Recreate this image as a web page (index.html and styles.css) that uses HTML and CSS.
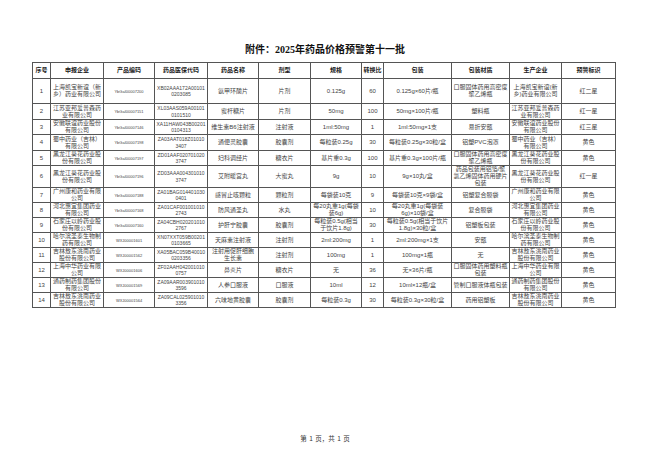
FILE: index.html
```html
<!DOCTYPE html>
<html lang="zh-CN">
<head>
<meta charset="utf-8">
<title>附件：2025年药品价格预警第十一批</title>
<link rel="stylesheet" href="styles.css">
</head>
<body>
<div class="page">
  <h1 class="title">附件：2025年药品价格预警第十一批</h1>
  <table class="grid">
    <colgroup>
      <col class="c-no"><col class="c-corp"><col class="c-code"><col class="c-yb"><col class="c-name"><col class="c-form"><col class="c-spec"><col class="c-ratio"><col class="c-pack"><col class="c-mat"><col class="c-maker"><col class="c-flag">
    </colgroup>
    <thead>
      <tr class="h16">
        <th>序号</th><th>申报企业</th><th>产品编码</th><th>药品医保代码</th><th>药品名称</th><th>剂型</th><th>规格</th><th>转换比</th><th>包装</th><th>包装材质</th><th>生产企业</th><th>预警标识</th>
      </tr>
    </thead>
    <tbody>
      <tr class="h25">
        <td>1</td><td>上海凯宝新谊（新乡）药业有限公司</td><td class="code">YbGaI00007200</td><td class="yb">XB02AAA172A001010203085</td><td>氨甲环酸片</td><td>片剂</td><td>0.125g</td><td>60</td><td>0.125g×60片/瓶</td><td>口服固体药用高密度聚乙烯瓶</td><td>上海凯宝新谊(新乡)药业有限公司</td><td>红二星</td>
      </tr>
      <tr class="h16">
        <td>2</td><td>江苏亚邦爱普森药业有限公司</td><td class="code">YbGaI00007151</td><td class="yb">XL03AAS059A001010101510</td><td>蜜杆糖片</td><td>片剂</td><td>50mg</td><td>100</td><td>50mg×100片/瓶</td><td>塑料瓶</td><td>江苏亚邦爱普森药业有限公司</td><td>红一星</td>
      </tr>
      <tr>
        <td>3</td><td>安徽联谊药业股份有限公司</td><td class="code">YbGaI00007146</td><td class="yb">XA11HAW043B002010104313</td><td>维生素B6注射液</td><td>注射液</td><td>1ml:50mg</td><td>1</td><td>1ml:50mg×1支</td><td>易折安瓿</td><td>安徽联谊药业股份有限公司</td><td>红三星</td>
      </tr>
      <tr class="h16">
        <td>4</td><td>蜀中药业（吉林）有限公司</td><td class="code">YbGaI00007198</td><td class="yb">ZA03AAT018Z010103407</td><td>通便灵胶囊</td><td>胶囊剂</td><td>每粒装0.25g</td><td>30</td><td>每粒装0.25g×30粒/盒</td><td>铝塑PVC泡罩</td><td>蜀中药业（吉林）有限公司</td><td>黄色</td>
      </tr>
      <tr>
        <td>5</td><td>黑龙江葵花药业股份有限公司</td><td class="code">YbGaI00007197</td><td class="yb">ZD01AAF0207010203747</td><td>妇科调经片</td><td>糖衣片</td><td>基片重0.3g</td><td>100</td><td>基片重0.3g×100片/瓶</td><td>口服固体药用高密度聚乙烯瓶</td><td>黑龙江葵花药业股份有限公司</td><td>黄色</td>
      </tr>
      <tr class="h22">
        <td>6</td><td>黑龙江葵花药业股份有限公司</td><td class="code">YbGaI00007196</td><td class="yb">ZD03AAA0043010103747</td><td>艾附暖宫丸</td><td>大蜜丸</td><td>9g</td><td>10</td><td>9g×10丸/盒</td><td>药品包装用铝箔/聚氯乙烯固体药用硬片包装</td><td>黑龙江葵花药业股份有限公司</td><td>红一星</td>
      </tr>
      <tr>
        <td>7</td><td>广州康和药业有限公司</td><td class="code">YbGaI00007188</td><td class="yb">ZA01BAG0144010300401</td><td>感冒止咳颗粒</td><td>颗粒剂</td><td>每袋装10克</td><td>9</td><td>每袋装10克×9袋/盒</td><td>铝塑复合膜袋</td><td>广州康和药业有限公司</td><td>黄色</td>
      </tr>
      <tr>
        <td>8</td><td>河北惠宜集团药业有限公司</td><td class="code">YbGaI00007168</td><td class="yb">ZA01CAF0010010102743</td><td>防风通圣丸</td><td>水丸</td><td>每20丸重1g(每袋装6g)</td><td>10</td><td>每20丸重1g(每袋装6g)×10袋/盒</td><td>复合膜袋</td><td>河北惠宜集团药业有限公司</td><td>黄色</td>
      </tr>
      <tr>
        <td>9</td><td>石家庄以岭药业股份有限公司</td><td class="code">YbGaI00007160</td><td class="yb">ZA04CBH0202010102767</td><td>护肝宁胶囊</td><td>胶囊剂</td><td>每粒装0.5g(相当于饮片1.8g)</td><td>30</td><td>每粒装0.5g(相当于饮片1.8g)×30粒/盒</td><td>铝塑板包装</td><td>石家庄以岭药业股份有限公司</td><td>黄色</td>
      </tr>
      <tr>
        <td>10</td><td>哈尔滨圣泰生物制药有限公司</td><td class="code">WXJ00001601</td><td class="yb">XN07XXT059B002010103665</td><td>天麻素注射液</td><td>注射剂</td><td>2ml:200mg</td><td>1</td><td>2ml:200mg×1支</td><td>安瓿</td><td>哈尔滨圣泰生物制药有限公司</td><td>黄色</td>
      </tr>
      <tr>
        <td>11</td><td>吉林敖东洮南药业股份有限公司</td><td class="code">WXJ00001562</td><td class="yb">XA05BAC059B400100203356</td><td>注射用促肝细胞生长素</td><td>注射剂</td><td>100mg</td><td>1</td><td>100mg×1瓶</td><td>无</td><td>吉林敖东洮南药业股份有限公司</td><td>黄色</td>
      </tr>
      <tr>
        <td>12</td><td>上海中华药业有限公司</td><td class="code">WXJ00001606</td><td class="yb">ZF02AAH0420010100757</td><td>鼻炎片</td><td>糖衣片</td><td>无</td><td>36</td><td>无×36片/瓶</td><td>口服固体药用塑料瓶包装</td><td>上海中华药业有限公司</td><td>黄色</td>
      </tr>
      <tr>
        <td>13</td><td>通药制药集团股份有限公司</td><td class="code">WXJ00001569</td><td class="yb">ZA09AAR0039010103596</td><td>人参口服液</td><td>口服液</td><td>10ml</td><td>12</td><td>10ml×12瓶/盒</td><td>管制口服液体瓶包装</td><td>通药制药集团股份有限公司</td><td>黄色</td>
      </tr>
      <tr>
        <td>14</td><td>吉林敖东洮南药业股份有限公司</td><td class="code">WXJ00001564</td><td class="yb">ZA09CAL0259010103356</td><td>六味地黄胶囊</td><td>胶囊剂</td><td>每粒装0.3g</td><td>30</td><td>每粒装0.3g×30粒/盒</td><td>药用铝塑板</td><td>吉林敖东洮南药业股份有限公司</td><td>黄色</td>
      </tr>
    </tbody>
  </table>
  <p class="footer">第 1 页，共 1 页</p>
</div>
</body>
</html>
```
FILE: styles.css
```css
html, body {
  margin: 0;
  padding: 0;
  background: #ffffff;
}

.page {
  width: 650px;
  height: 459px;
  display: flex;
  flex-direction: column;
  align-items: flex-start;
  box-sizing: border-box;
  padding-left: 32px;
  font-family: "Liberation Sans", "Noto Sans CJK SC", sans-serif;
  color: #444;
}

.title {
  align-self: stretch;
  margin: 0 32px 5px 0;
  padding-top: 43px;
  text-align: center;
  font-family: "Liberation Serif", "Noto Sans CJK SC", serif;
  font-size: 10px;
  line-height: 14px;
  font-weight: bold;
  color: #111;
}

.grid {
  border-collapse: collapse;
  table-layout: fixed;
  width: 583px;
  font-size: 6px;
  line-height: 7px;
}

.grid th,
.grid td {
  border: 1px solid #555;
  padding: 0 1.5px;
  text-align: center;
  vertical-align: middle;
  overflow: hidden;
}

.grid th {
  font-weight: bold;
  color: #1a1a1a;
}

.grid tr { height: 15px; }
.grid tr.h16 { height: 16px; }
.grid tr.h22 { height: 22px; }
.grid tr.h25 { height: 25px; }

.c-no { width: 18px; }
.c-corp { width: 53px; }
.c-code { width: 51px; }
.c-yb { width: 53px; }
.c-name { width: 51px; }
.c-form { width: 52px; }
.c-spec { width: 51px; }
.c-ratio { width: 22px; }
.c-pack { width: 68px; }
.c-mat { width: 58px; }
.c-maker { width: 52px; }
.c-flag { width: 54px; }

.grid td.code {
  font-size: 4px;
}

.grid td.yb {
  font-size: 5px;
  line-height: 6.5px;
  word-break: break-all;
}

.footer {
  align-self: stretch;
  margin: auto 32px 17px 0;
  text-align: center;
  font-family: "Noto Sans CJK SC", sans-serif;
  font-size: 6.5px;
  line-height: 8px;
  word-spacing: 1px;
  color: #333;
}
```
